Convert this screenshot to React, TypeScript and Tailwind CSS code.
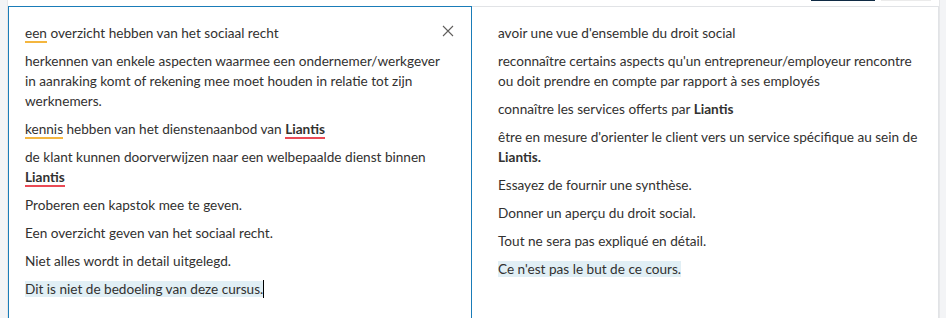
import React from 'react';

const FONT = { fontFamily: 'Lato, "Noto Sans", sans-serif' };

const Warn: React.FC<{ children: React.ReactNode; red?: boolean }> = ({ children, red }) => (
  <span className={`border-b-2 ${red ? 'border-[#ea4a55]' : 'border-[#f4b63f]'}`}>{children}</span>
);

export default function App() {
  return (
    <div className="w-[946px] h-[318px] flex bg-white overflow-hidden text-[13.6px] leading-[20px] text-[#323130]" style={FONT}>
      <div className="w-[8px] bg-[#f3f4f6] border-r border-[#e6e7e9]" />

      <div className="flex flex-col w-[931px]">
        <div className="h-[6px] flex items-start justify-end gap-[6px] pr-[8px]">
          <div className="w-[64px] h-px bg-[#0f2a44]" />
          <div className="w-[50px] h-px bg-[#ebebeb]" />
        </div>

        <div className="flex flex-1">
          {/* source (editing) */}
          <div className="relative w-[464px] border border-b-0 border-[#1a7cb8] pl-[16px] pr-[31px] pt-[16px] space-y-[8px]">
            <button className="absolute top-[18px] right-[17px] text-[#605e5c]" aria-label="close">
              <svg width="12" height="12" viewBox="0 0 12 12" fill="none" stroke="currentColor" strokeWidth="1.1">
                <path d="M1 1 L11 11 M11 1 L1 11" />
              </svg>
            </button>
            <p><Warn>een</Warn> overzicht hebben van het sociaal recht</p>
            <p>herkennen van enkele aspecten waarmee een ondernemer/werkgever in aanraking komt of rekening mee moet houden in relatie tot zijn werknemers.</p>
            <p><Warn>kennis</Warn> hebben van het dienstenaanbod van <Warn red><b>Liantis</b></Warn></p>
            <p>de klant kunnen doorverwijzen naar een welbepaalde dienst binnen <Warn red><b>Liantis</b></Warn></p>
            <p>Proberen een kapstok mee te geven.</p>
            <p>Een overzicht geven van het sociaal recht.</p>
            <p>Niet alles wordt in detail uitgelegd.</p>
            <p>
              <span className="bg-[#e1eff5]">Dit is niet de bedoeling van deze cursus.</span>
              <span className="inline-block w-px h-[18px] bg-black align-[-4px]" />
            </p>
          </div>

          {/* target */}
          <div className="w-[467px] border-t border-r border-[#e1e3e6] pl-[26px] pr-[18px] pt-[16px] space-y-[8px]">
            <p>avoir une vue d'ensemble du droit social</p>
            <p>reconnaître certains aspects qu'un entrepreneur/employeur rencontre ou doit prendre en compte par rapport à ses employés</p>
            <p>connaître les services offerts par <b>Liantis</b></p>
            <p>être en mesure d'orienter le client vers un service spécifique au sein de <b>Liantis.</b></p>
            <p>Essayez de fournir une synthèse.</p>
            <p>Donner un aperçu du droit social.</p>
            <p>Tout ne sera pas expliqué en détail.</p>
            <p><span className="bg-[#e1eff5]">Ce n'est pas le but de ce cours.</span></p>
          </div>
        </div>
      </div>

      <div className="w-[7px] bg-[#f3f4f6] border-l border-[#e6e7e9]" />
    </div>
  );
}
